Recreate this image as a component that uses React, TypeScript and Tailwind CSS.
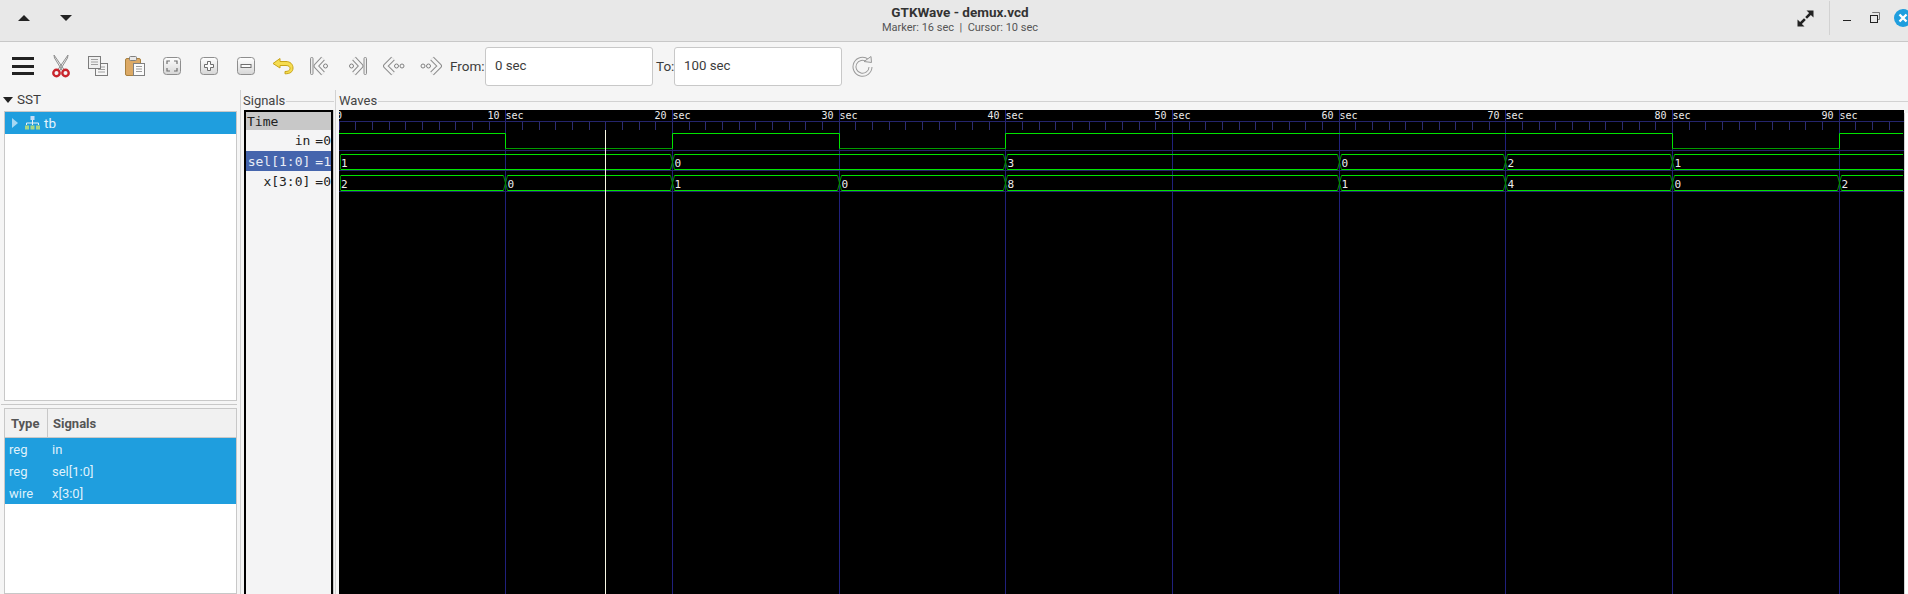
import React from 'react';

const MONO = "'DejaVu Sans Mono', monospace";
const PX_PER_SEC = 16.67;
const WAVE_W = 1565;
const WAVE_H = 484;

const ticks = Array.from({ length: 94 }, (_, i) => i);
const secs = [10, 20, 30, 40, 50, 60, 70, 80, 90];
const gx = (sec: number) => Math.floor(sec * PX_PER_SEC) + 0.5;

function Bus({ y0, y1, edges, labels }: { y0: number; y1: number; edges: number[]; labels: string[] }) {
  const starts = [0, ...edges];
  return (
    <g>
      {starts.map((s, i) => {
        const a = i === 0 ? 0 : gx(s);
        const next = edges[i];
        const b = next === undefined ? WAVE_W - 1 : gx(next);
        const right = next === undefined ? b : b - 2;
        return (
          <g key={i}>
            <path d={`M${a + 2} ${y0}H${right}M${a + 2} ${y1}H${right}`} fill="none" stroke="#00e400" />
            {i === 0 && <path d={`M1.5 ${y0}V${y1}`} stroke="#008c00" />}
            {next !== undefined && (
              <path d={`M${b - 2} ${y0}L${b + 2} ${y1}M${b - 2} ${y1}L${b + 2} ${y0}`} stroke="#009000" />
            )}
            <text x={a + 2} y={y1 - 3} fill="#ececec" fontSize="11" fontFamily={MONO}>
              {labels[i]}
            </text>
          </g>
        );
      })}
    </g>
  );
}

function Waves() {
  return (
    <svg width={WAVE_W} height={WAVE_H} className="block bg-black shrink-0">
      {secs.map((s) => (
        <line key={s} x1={gx(s)} x2={gx(s)} y1="0" y2={WAVE_H} stroke="#20207c" />
      ))}
      <line x1="0" x2={WAVE_W} y1="11.5" y2="11.5" stroke="#24246c" />
      {ticks.map((i) => (
        <line key={i} x1={gx(i)} x2={gx(i)} y1="12" y2="20" stroke="#2c2c70" />
      ))}
      <line x1="0" x2={WAVE_W} y1="40.5" y2="40.5" stroke="#24246c" />
      <line x1="0" x2={WAVE_W} y1="60.5" y2="60.5" stroke="#24246c" />
      <line x1="0" x2={WAVE_W} y1="81.5" y2="81.5" stroke="#24246c" />
      <text x="0" y="9" textAnchor="middle" fill="#ececec" fontSize="10" fontFamily={MONO}>0</text>
      {secs.map((s) => (
        <text key={s} x={gx(s)} y="9" textAnchor="middle" fill="#ececec" fontSize="10" fontFamily={MONO}>
          {`${s} sec`}
        </text>
      ))}
      <path d="M0 23.5H166.5V38.5H333.5V23.5H500.5V38.5H666.5V23.5H1333.5V38.5H1500.5V23.5H1564" fill="none" stroke="#00e400" />
      <path d="M166.5 38.5H333.5M500.5 38.5H666.5M1333.5 38.5H1500.5" fill="none" stroke="#009c00" />
      <Bus y0={44.5} y1={59.5} edges={[20, 40, 60, 70, 80]} labels={['1', '0', '3', '0', '2', '1']} />
      <Bus y0={65.5} y1={80.5} edges={[10, 20, 30, 40, 60, 70, 80, 90]} labels={['2', '0', '1', '0', '8', '1', '4', '0', '2']} />
      <line x1="266.5" x2="266.5" y1="20" y2={WAVE_H} stroke="#f8f8e4" />
    </svg>
  );
}

function Slot({ children }: { children: React.ReactNode }) {
  return <div className="w-[37px] shrink-0 flex items-center justify-center">{children}</div>;
}

function Knob({ children }: { children: React.ReactNode }) {
  return (
    <svg width="20" height="20" viewBox="0 0 20 20">
      <defs>
        <linearGradient id="knob" x1="0" y1="0" x2="0" y2="1">
          <stop offset="0" stopColor="#ffffff" />
          <stop offset="1" stopColor="#d6d6d6" />
        </linearGradient>
      </defs>
      <rect x="1.5" y="1.5" width="17" height="17" rx="3" fill="url(#knob)" stroke="#8e8e8e" />
      {children}
    </svg>
  );
}

function Nav({ flip, bar, dots }: { flip?: boolean; bar?: boolean; dots: number }) {
  const chevron = bar ? 'M14 4.5 L7 12 L14 19.5' : 'M10 4.5 L2.5 12 L10 19.5';
  return (
    <svg width="22" height="24" viewBox="0 0 22 24" className={flip ? '-scale-x-100' : ''}>
      {bar && <rect x="1.5" y="3.5" width="2.5" height="17" rx="1" fill="#ececec" stroke="#8e8e8e" />}
      <path d={chevron} fill="none" stroke="#8e8e8e" strokeWidth="5" strokeLinejoin="round" />
      <path d={chevron} fill="none" stroke="#f6f6f6" strokeWidth="3" strokeLinejoin="round" />
      {bar ? (
        <circle cx="16.5" cy="12" r="2" fill="#f6f6f6" stroke="#808080" />
      ) : (
        <>
          <circle cx="13.5" cy="12" r="2" fill="#f6f6f6" stroke="#808080" />
          {dots > 1 && <circle cx="19" cy="12" r="2" fill="#f6f6f6" stroke="#808080" />}
        </>
      )}
    </svg>
  );
}

function Toolbar() {
  return (
    <div className="h-[48px] shrink-0 flex items-center pl-[5px]">
      <Slot>
        <div className="w-[22px] -ml-[2px] flex flex-col gap-[4.5px]">
          <div className="h-[3px] bg-[#222]" />
          <div className="h-[3px] bg-[#222]" />
          <div className="h-[3px] bg-[#222]" />
        </div>
      </Slot>
      <Slot>
        <svg width="20" height="24" viewBox="0 0 20 24">
          <path d="M3 1 L3.5 4 L11.5 17 L13 15.5 Z M17 1 L16.5 4 L8.5 17 L7 15.5 Z" fill="#ececec" stroke="#8f8f8f" />
          <circle cx="5.5" cy="19" r="3.2" fill="none" stroke="#c8242c" strokeWidth="2.4" />
          <circle cx="14.5" cy="19" r="3.2" fill="none" stroke="#c8242c" strokeWidth="2.4" />
        </svg>
      </Slot>
      <Slot>
        <svg width="22" height="22" viewBox="0 0 22 22">
          <rect x="8.5" y="8.5" width="12" height="12" fill="#f6f6f6" stroke="#7c7c7c" />
          <path d="M11 12h7M11 14.5h7M11 17h7" stroke="#a0a0a0" />
          <rect x="1.5" y="1.5" width="12" height="12" fill="#f0f0f0" stroke="#7c7c7c" />
          <path d="M4 4.5h7M4 7h7M4 9.5h7" stroke="#a0a0a0" />
        </svg>
      </Slot>
      <Slot>
        <svg width="22" height="22" viewBox="0 0 22 22">
          <rect x="1.5" y="3.5" width="15" height="17" rx="1.5" fill="#dca965" stroke="#a8803e" />
          <rect x="5.5" y="1.5" width="7" height="4" rx="1" fill="#e8e8e8" stroke="#808080" />
          <rect x="9.5" y="8.5" width="11" height="12" fill="#fbfbfb" stroke="#808080" />
          <path d="M12 11.5h6M12 14h6M12 16.5h6" stroke="#9c9c9c" />
        </svg>
      </Slot>
      <Slot>
        <Knob>
          <path d="M8 5H5v3M12 5h3v3M15 12v3h-3M8 15H5v-3" fill="none" stroke="#6e6e6e" strokeWidth="1.2" />
        </Knob>
      </Slot>
      <Slot>
        <Knob>
          <path d="M8.5 5.5h3v3h3v3h-3v3h-3v-3h-3v-3h3z" fill="#fbfbfb" stroke="#6e6e6e" />
        </Knob>
      </Slot>
      <Slot>
        <Knob>
          <rect x="5" y="8.5" width="10" height="3" fill="#fbfbfb" stroke="#6e6e6e" />
        </Knob>
      </Slot>
      <Slot>
        <svg width="23" height="18" viewBox="0 0 23 18">
          <path d="M9 1.5 L2 6.5 L9 11 V8.5 H15 C18 8.5 19 10 19 11.5 C19 13.5 17 14.5 14 14.5 V16.8 C19 16.8 22 15 22 11 C22 7 19 4.5 15 4.5 H9 Z" fill="#f5dc50" stroke="#c8a418" strokeLinejoin="round" />
        </svg>
      </Slot>
      <Slot><Nav bar dots={1} /></Slot>
      <Slot><Nav bar flip dots={1} /></Slot>
      <Slot><Nav dots={2} /></Slot>
      <Slot><Nav flip dots={2} /></Slot>
      <div className="w-[36px] shrink-0 text-[13.5px] text-[#3c3c3c] pl-px">From:</div>
      <div className="w-[168px] h-[39px] shrink-0 bg-white border border-[#c8c8c8] rounded-[3px] text-[13.25px] flex items-center pl-[9px]">0 sec</div>
      <div className="w-[21px] shrink-0 text-[13.5px] text-[#3c3c3c] pl-[3px]">To:</div>
      <div className="w-[168px] h-[39px] shrink-0 bg-white border border-[#c8c8c8] rounded-[3px] text-[13.25px] flex items-center pl-[9px]">100 sec</div>
      <div className="ml-[10px]">
        <svg width="21" height="22" viewBox="0 0 21 22">
          <path d="M15.5 5.5 A8 8 0 1 0 18.5 12" fill="none" stroke="#9a9a9a" strokeWidth="4" />
          <path d="M15.5 5.5 A8 8 0 1 0 18.5 12" fill="none" stroke="#f4f4f4" strokeWidth="2" />
          <path d="M12 6.5 L19.5 7.5 L19 1.5 Z" fill="#eeeeee" stroke="#9a9a9a" strokeLinejoin="round" />
        </svg>
      </div>
    </div>
  );
}

function TitleBar() {
  return (
    <div className="h-[42px] shrink-0 bg-[#e8e8e8] border-b border-[#c8c8c8] grid grid-cols-[1fr_auto_1fr] items-center">
      <div className="flex items-center pl-[18px] pb-[6px] gap-[30px]">
        <div className="w-0 h-0 border-x-[6px] border-x-transparent border-b-[6px] border-b-[#222]" />
        <div className="w-0 h-0 border-x-[6px] border-x-transparent border-t-[6px] border-t-[#222]" />
      </div>
      <div className="flex flex-col items-center leading-none pb-[2px] pl-[12px]">
        <div className="text-[13.5px] font-bold text-[#333]">GTKWave - demux.vcd</div>
        <div className="text-[11px] text-[#555] mt-[3px] whitespace-pre">Marker: 16 sec  |  Cursor: 10 sec</div>
      </div>
      <div className="flex items-center justify-end h-full overflow-hidden">
        <svg width="17" height="17" viewBox="0 0 17 17" className="mr-[15px] mt-[-5px]">
          <path d="M9.5 0.5h7v7l-2.6-2.6-3.9 3.9-1.8-1.8 3.9-3.9zM7.5 16.5h-7v-7l2.6 2.6 3.9-3.9 1.8 1.8-3.9 3.9z" fill="#222" />
        </svg>
        <div className="w-px h-[34px] bg-[#d2d2d2] mr-[13px] mt-[-6px]" />
        <div className="w-[8px] h-px bg-[#222] mr-[19px] mt-[-1px]" />
        <svg width="10" height="11" viewBox="0 0 10 11" className="mr-[14px] mt-[-6px]">
          <path d="M2.5 1V.5h7v7H8" fill="none" stroke="#777" />
          <rect x=".5" y="3.5" width="7" height="7" fill="none" stroke="#222" />
        </svg>
        <div className="w-[14px] h-[18px] overflow-hidden shrink-0 mt-[-5px]">
          <svg width="18" height="18" viewBox="0 0 18 18" className="block">
            <circle cx="9" cy="9" r="9" fill="#1f9ede" />
            <path d="M5.5 5.5 L12.5 12.5 M12.5 5.5 L5.5 12.5" stroke="#fff" strokeWidth="2.4" />
          </svg>
        </div>
      </div>
    </div>
  );
}

function LeftPane() {
  return (
    <div className="w-[241px] shrink-0 flex flex-col border-r border-[#d2d2d2] pr-[3px]">
      <div className="h-[21px] shrink-0 text-[13.5px] flex items-center pl-[3px] gap-[4px] pb-[2px]">
        <div className="w-0 h-0 border-x-[5.5px] border-x-transparent border-t-[6px] border-t-[#222]" />
        SST
      </div>
      <div className="h-[290px] shrink-0 ml-[4px] bg-white border border-[#c8c8c8]">
        <div className="h-[22px] bg-[#1f9ede] text-[#e6f4fc] text-[13.5px] flex items-center pl-[7px]">
          <div className="w-0 h-0 border-y-[5.5px] border-y-transparent border-l-[6px] border-l-[#a7d8f3]" />
          <svg width="17" height="14" viewBox="0 0 17 14" className="ml-[6px] mr-[3px]">
            <rect x="6.5" y="0" width="4" height="4" fill="#c8ddf6" />
            <path d="M8.5 4V7M2.5 9V7h12v2M8.5 7v2" fill="none" stroke="#e8f2f8" />
            <rect x="1" y="9.5" width="4" height="4" fill="#a9d684" />
            <rect x="6.5" y="9.5" width="4" height="4" fill="#a9d684" />
            <rect x="12" y="9.5" width="4" height="4" fill="#a9d684" />
          </svg>
          tb
        </div>
      </div>
      <div className="h-[7px] shrink-0 flex items-center pl-[1px]">
        <div className="h-px w-full bg-[#c8c8c8]" />
      </div>
      <div className="flex-1 min-h-0 ml-[4px] bg-white border border-[#c8c8c8]">
        <div className="h-[29px] bg-[#f1f1f1] border-b border-[#c8c8c8] text-[13px] font-bold flex items-center text-[#555]">
          <div className="w-[43px] pl-[6px] pt-[2px] border-r border-[#c8c8c8] h-full flex items-center">Type</div>
          <div className="pl-[5px] pt-[2px]">Signals</div>
        </div>
        <div className="bg-[#1f9ede] text-[#dff1fb] text-[13px]">
          {[['reg', 'in'], ['reg', 'sel[1:0]'], ['wire', 'x[3:0]']].map(([t, s]) => (
            <div key={s} className="h-[22px] flex items-center pt-[2px]">
              <div className="w-[47px] pl-[4px]">{t}</div>
              <div>{s}</div>
            </div>
          ))}
        </div>
      </div>
    </div>
  );
}

function FrameLabel({ text }: { text: string }) {
  return (
    <div className="h-[20px] shrink-0 flex items-center pt-[2px] text-[13px] text-[#444]">
      <span className="pr-px">{text}</span>
      <div className="flex-1 h-px bg-[#d2d2d2]" />
    </div>
  );
}

function SignalRow({ name, value, selected, h }: { name: string; value: string; selected?: boolean; h: string }) {
  return (
    <div className={`flex justify-end items-center ${h} ${selected ? 'bg-[#4565ad] text-[#e8ecf6]' : 'text-[#222]'}`}>
      <span>{name}</span>
      <span className="ml-[5px]">={value}</span>
    </div>
  );
}

function SignalsPane() {
  return (
    <div className="w-[95px] shrink-0 flex flex-col border-r border-[#d2d2d2] pl-[3px] pr-px">
      <div className="-ml-px">
        <FrameLabel text="Signals" />
      </div>
      <div className="flex-1 min-h-0 border-r border-[#c8c8c8]">
        <div className="h-full border-x-2 border-t-2 border-black bg-[#f4f4f5] text-[13px] leading-none overflow-hidden" style={{ fontFamily: MONO }}>
          <div className="h-[18px] bg-[#c8c8c8] text-[#222] flex items-center pl-[1px]">Time</div>
          <SignalRow name="in" value="0" h="h-[21px]" />
          <SignalRow name="sel[1:0]" value="1" h="h-[20px]" selected />
          <SignalRow name="x[3:0]" value="0" h="h-[21px]" />
        </div>
      </div>
    </div>
  );
}

export default function App() {
  return (
    <div className="w-[1908px] h-[594px] overflow-hidden bg-[#f5f5f5] text-[#3c3c3c] flex flex-col font-['Roboto',sans-serif]">
      <TitleBar />
      <Toolbar />
      <div className="flex-1 min-h-0 flex">
        <LeftPane />
        <SignalsPane />
        <div className="flex-1 min-w-0 flex flex-col pl-[3px]">
          <FrameLabel text="Waves" />
          <div className="flex-1 min-h-0 flex">
            <Waves />
            <div className="flex-1 mt-[3px] bg-white border-l border-[#d2d2d2]" />
          </div>
        </div>
      </div>
    </div>
  );
}
